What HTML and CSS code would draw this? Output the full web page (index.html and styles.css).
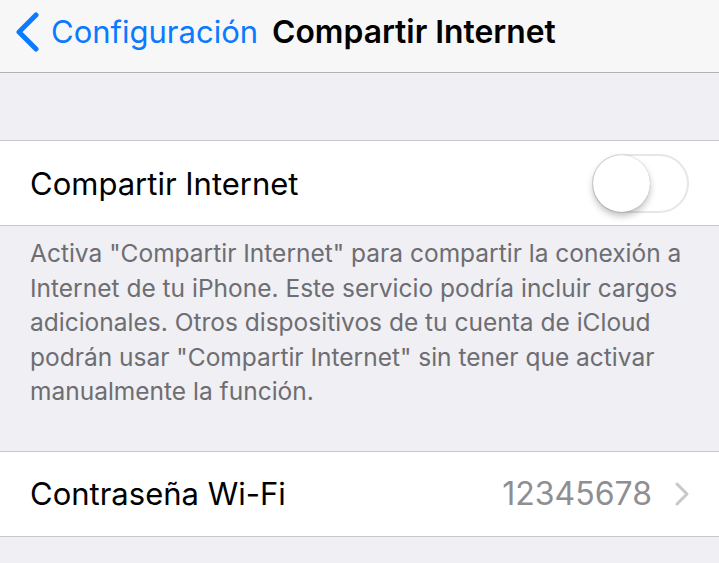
FILE: index.html
```html
<!DOCTYPE html>
<html lang="es">
<head>
  <meta charset="UTF-8" />
  <meta name="viewport" content="width=device-width, initial-scale=1.0" />
  <title>Compartir Internet</title>
  <link rel="stylesheet" href="styles.css">
</head>
<body>

  <header class="nav-bar">
    <a class="back-link" href="#">
      <svg class="back-chevron" width="26" height="40" viewBox="0 0 26 40">
        <path d="M22 3 L5 20 L22 37" fill="none" stroke="#0a7aff" stroke-width="5" stroke-linecap="round" stroke-linejoin="round"/>
      </svg>
      <span>Configuración</span>
    </a>
    <h1 class="nav-title">Compartir Internet</h1>
  </header>

  <!-- Toggle section -->
  <section class="group first-group">
    <div class="cell">
      <span class="cell-label">Compartir Internet</span>
      <span class="switch"><span class="knob"></span></span>
    </div>
  </section>
  <p class="group-footer">Activa "Compartir Internet" para compartir la conexión a Internet de tu iPhone. Este servicio podría incluir cargos adicionales. Otros dispositivos de tu cuenta de iCloud podrán usar "Compartir Internet" sin tener que activar manualmente la función.</p>

  <!-- Password section -->
  <section class="group">
    <div class="cell">
      <span class="cell-label">Contraseña Wi-Fi</span>
      <span class="cell-value">12345678</span>
      <svg class="disclosure" width="16" height="26" viewBox="0 0 16 26">
        <path d="M3 3 L13 13 L3 23" fill="none" stroke="#c7c7cc" stroke-width="3" stroke-linecap="round" stroke-linejoin="round"/>
      </svg>
    </div>
  </section>

</body>
</html>
```

FILE: styles.css
```css
* {
  margin: 0;
  padding: 0;
  box-sizing: border-box;
  font-family: "Inter", "Liberation Sans", "Arial", sans-serif;
}

body {
  background: #efeff4;
  color: #000;
  width: 719px;
  height: 563px;
  overflow: hidden;
}

.nav-bar {
  height: 73px;
  background: #f7f7f8;
  border-bottom: 1px solid #b1b1b3;
  display: flex;
  align-items: center;
  padding-left: 14px;
  padding-bottom: 9px;
}

.back-link {
  display: flex;
  align-items: center;
  color: #0a7aff;
  text-decoration: none;
  font-size: 31px;
}

.back-chevron {
  margin-right: 11px;
}

.nav-title {
  margin-left: 14px;
  font-size: 31.8px;
  font-weight: 600;
}

.group {
  background: #fff;
  border-top: 1px solid #c8c7cc;
  border-bottom: 1px solid #c8c7cc;
}

.first-group {
  margin-top: 67px;
}

.cell {
  height: 84px;
  display: flex;
  align-items: center;
  padding: 0 30px;
}

.cell-label {
  flex: 1;
  font-size: 31px;
}

.cell-value {
  font-size: 32px;
  color: #8e8e93;
  margin-right: 22px;
}

.disclosure {
  margin-right: -1px;
}

.switch {
  position: relative;
  width: 97px;
  height: 59px;
  border-radius: 30px;
  border: 2px solid #e5e5ea;
  background: #fff;
}

.knob {
  position: absolute;
  left: -1px;
  top: -1px;
  width: 57px;
  height: 57px;
  border-radius: 50%;
  background: #fff;
  box-shadow: 0 4px 7px rgba(0, 0, 0, 0.25), 0 0 1px rgba(0, 0, 0, 0.3);
}

.group-footer {
  padding: 10px 30px 42px;
  font-size: 24.5px;
  line-height: 34.5px;
  color: #6d6d72;
}
```
